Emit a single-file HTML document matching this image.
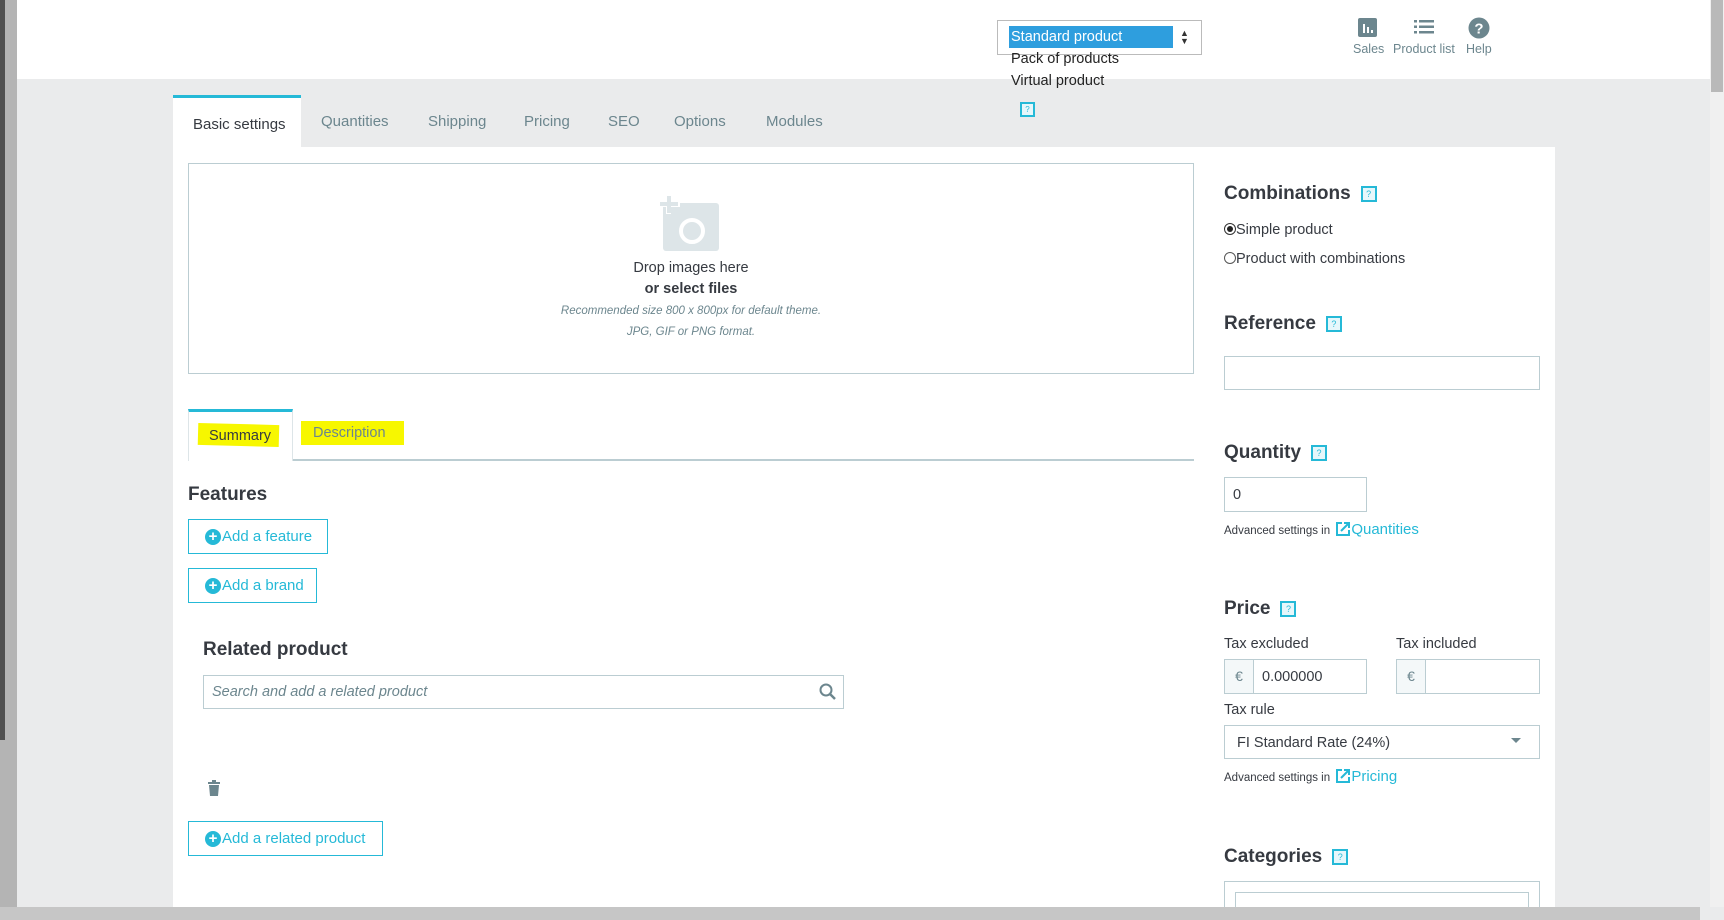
<!DOCTYPE html>
<html><head><meta charset="utf-8"><style>
*{box-sizing:border-box;margin:0;padding:0}
body{width:1724px;height:920px;overflow:hidden;position:relative;background:#eaebec;font-family:"Liberation Sans",sans-serif;color:#363a41}
.a{position:absolute;white-space:nowrap}
.tab{position:absolute;top:113px;font-size:15px;color:#6c868e}
.h{position:absolute;font-size:19px;font-weight:bold;color:#363a41}
.q{display:inline-block;width:16px;height:16px;border:2px solid #25b9d7;background:#e6f7fb;color:#25b9d7;font-size:9px;text-align:center;line-height:12px;vertical-align:middle;margin-left:10px;font-weight:normal}
.inp{position:absolute;border:1px solid #bbcdd2;background:#fff}
.btn{position:absolute;border:1px solid #25b9d7;color:#25b9d7;font-size:15px;background:#fff;padding-left:16px;display:flex;align-items:center}
.plus{display:inline-block;width:16px;height:16px;border-radius:50%;background:#25b9d7;color:#fff;font-size:15px;line-height:16px;text-align:center;font-weight:bold;margin-right:1px}
.lbl{position:absolute;font-size:14.5px;color:#363a41}
.small{position:absolute;font-size:11.5px;color:#363a41}
.lnk{color:#25b9d7;font-size:15px}
</style></head><body>
<div class="a" style="left:0;top:0;width:1724px;height:79px;background:#fff"></div>
<div class="a" style="left:0;top:0;width:17px;height:907px;background:#b4b4b4"></div>
<div class="a" style="left:0;top:0;width:5px;height:740px;background:#505050"></div>
<div class="a" style="left:1710px;top:0;width:14px;height:907px;background:#f0f0f0"></div>
<div class="a" style="left:1711px;top:0;width:12px;height:92px;background:#b9b9b9"></div>

<div class="a" style="left:997px;top:20px;width:205px;height:35px;border:1px solid #bbb;background:#fff"></div>
<div class="a" style="left:1009px;top:26px;width:164px;height:22px;background:#2e9ede;color:#fff;font-size:14.5px;line-height:22px;padding-left:2px">Standard product</div>
<div class="a" style="left:1180px;top:29px;font-size:9px;line-height:8px;color:#333">▲<br>▼</div>
<div class="a" style="left:1011px;top:50px;font-size:14.5px;line-height:18px;color:#222">Pack of products</div>
<div class="a" style="left:1011px;top:72px;font-size:14.5px;line-height:18px;color:#222">Virtual product</div>
<div class="a" style="left:1020px;top:102px;width:15px;height:15px;border:2px solid #25b9d7;background:#e6f7fb;color:#25b9d7;font-size:8px;text-align:center;line-height:11px">?</div>

<svg class="a" style="left:1358px;top:18px" width="20" height="20"><rect width="19" height="19" rx="2" fill="#6c868e"/><rect x="5" y="6" width="2" height="9" fill="#fff"/><rect x="9" y="9" width="2" height="6" fill="#fff"/><rect x="13" y="12" width="2" height="3" fill="#fff"/></svg>
<svg class="a" style="left:1414px;top:19px" width="21" height="16" fill="#6c868e"><rect x="0" y="1" width="3" height="2.5"/><rect x="5" y="1" width="15" height="2.5"/><rect x="0" y="6.5" width="3" height="2.5"/><rect x="5" y="6.5" width="15" height="2.5"/><rect x="0" y="12" width="3" height="2.5"/><rect x="5" y="12" width="15" height="2.5"/></svg>
<svg class="a" style="left:1468px;top:17px" width="22" height="22"><circle cx="11" cy="11" r="10.5" fill="#6c868e"/><text x="11" y="16.5" font-size="15" font-weight="bold" fill="#fff" text-anchor="middle" font-family="Liberation Sans">?</text></svg>
<div class="a" style="left:1353px;top:42px;font-size:12.5px;color:#6c868e">Sales</div>
<div class="a" style="left:1393px;top:42px;font-size:12.5px;color:#6c868e">Product list</div>
<div class="a" style="left:1466px;top:42px;font-size:12.5px;color:#6c868e">Help</div>

<div class="a" style="left:173px;top:147px;width:1382px;height:773px;background:#fff"></div>
<div class="a" style="left:173px;top:95px;width:128px;height:53px;background:#fff;border-top:3px solid #25b9d7"></div>
<div class="tab" style="left:193px;top:116px;color:#363a41">Basic settings</div>
<div class="tab" style="left:321px">Quantities</div>
<div class="tab" style="left:428px">Shipping</div>
<div class="tab" style="left:524px">Pricing</div>
<div class="tab" style="left:608px">SEO</div>
<div class="tab" style="left:674px">Options</div>
<div class="tab" style="left:766px">Modules</div>

<div class="a" style="left:188px;top:163px;width:1006px;height:211px;border:1px solid #bbcdd2"></div>
<svg class="a" style="left:658px;top:196px" width="64" height="58"><rect x="5" y="7" width="56" height="48" rx="3" fill="#dde5e8"/><rect x="0" y="6" width="22" height="5" fill="#fff"/><rect x="8" y="0" width="5" height="18" fill="#fff"/><rect x="2" y="6" width="18" height="4" fill="#dde5e8"/><rect x="9" y="0" width="4" height="17" fill="#dde5e8"/><circle cx="34" cy="35" r="11" fill="none" stroke="#fff" stroke-width="4"/></svg>
<div class="a" style="left:188px;width:1006px;top:260px;text-align:center;font-size:14.5px;color:#363a41">Drop images here</div>
<div class="a" style="left:188px;width:1006px;top:281px;text-align:center;font-size:14.5px;font-weight:bold;color:#363a41">or select files</div>
<div class="a" style="left:188px;width:1006px;top:305px;text-align:center;font-size:11.5px;font-style:italic;color:#6c868e">Recommended size 800 x 800px for default theme.</div>
<div class="a" style="left:188px;width:1006px;top:326px;text-align:center;font-size:11.5px;font-style:italic;color:#6c868e">JPG, GIF or PNG format.</div>

<div class="a" style="left:188px;top:459px;width:1006px;height:2px;background:#bbcdd2"></div>
<div class="a" style="left:188px;top:409px;width:105px;height:52px;background:#fff;border:1px solid #dde5e8;border-top:3px solid #25b9d7;border-bottom:none"></div>
<div class="a" style="left:198px;top:424px;width:81px;height:22px;background:#f7f700;transform:rotate(1.5deg)"></div>
<div class="a" style="left:209px;top:428px;font-size:14.5px;color:#363a41">Summary</div>
<div class="a" style="left:301px;top:421px;width:103px;height:24px;background:#f7f700"></div>
<div class="a" style="left:313px;top:425px;font-size:14.5px;color:#6c868e">Description</div>

<div class="h" style="left:188px;top:484px">Features</div>
<div class="btn" style="left:188px;top:519px;width:140px;height:35px"><span class="plus">+</span>Add a feature</div>
<div class="btn" style="left:188px;top:568px;width:129px;height:35px"><span class="plus">+</span>Add a brand</div>
<div class="h" style="left:203px;top:639px">Related product</div>
<div class="inp" style="left:203px;top:675px;width:641px;height:34px"></div>
<div class="a" style="left:212px;top:684px;font-size:14.5px;font-style:italic;color:#6c868e">Search and add a related product</div>
<svg class="a" style="left:818px;top:682px" width="20" height="20"><circle cx="8" cy="8" r="5.5" fill="none" stroke="#6c868e" stroke-width="2"/><line x1="12" y1="12" x2="17" y2="17" stroke="#6c868e" stroke-width="2.5"/></svg>
<svg class="a" style="left:207px;top:780px" width="14" height="17" fill="#6c868e"><rect x="1" y="2" width="12" height="2"/><rect x="5" y="0" width="4" height="2"/><path d="M2 5h10l-1 11H3z"/></svg>
<div class="btn" style="left:188px;top:821px;width:195px;height:35px"><span class="plus">+</span>Add a related product</div>

<div class="h" style="left:1224px;top:183px">Combinations<span class="q">?</span></div>
<div class="lbl" style="left:1224px;top:222px"><span style="display:inline-block;width:12px;height:12px;border:1px solid #333;border-radius:50%;vertical-align:-1px;position:relative"><span style="position:absolute;left:2px;top:2px;width:6px;height:6px;border-radius:50%;background:#222"></span></span>Simple product</div>
<div class="lbl" style="left:1224px;top:251px"><span style="display:inline-block;width:12px;height:12px;border:1px solid #555;border-radius:50%;vertical-align:-1px"></span>Product with combinations</div>
<div class="h" style="left:1224px;top:313px">Reference<span class="q">?</span></div>
<div class="inp" style="left:1224px;top:356px;width:316px;height:34px"></div>
<div class="h" style="left:1224px;top:442px">Quantity<span class="q">?</span></div>
<div class="inp" style="left:1224px;top:477px;width:143px;height:35px"></div>
<div class="lbl" style="left:1233px;top:487px">0</div>
<div class="small" style="left:1224px;top:521px">Advanced settings in <svg width="16" height="16" style="vertical-align:-3px;margin-left:2px"><path d="M7 2H2v12h12V9" fill="none" stroke="#25b9d7" stroke-width="2"/><path d="M6 10L14 2M9 2h5v5" fill="none" stroke="#25b9d7" stroke-width="2"/></svg><span class="lnk">Quantities</span></div>
<div class="h" style="left:1224px;top:598px">Price<span class="q">?</span></div>
<div class="lbl" style="left:1224px;top:636px">Tax excluded</div>
<div class="lbl" style="left:1396px;top:636px">Tax included</div>
<div class="inp" style="left:1224px;top:659px;width:143px;height:35px"></div>
<div class="a" style="left:1224px;top:659px;width:30px;height:35px;background:#f4f8f9;border:1px solid #bbcdd2;color:#6c868e;font-size:14px;text-align:center;line-height:33px">€</div>
<div class="lbl" style="left:1262px;top:669px">0.000000</div>
<div class="inp" style="left:1396px;top:659px;width:144px;height:35px"></div>
<div class="a" style="left:1396px;top:659px;width:30px;height:35px;background:#f4f8f9;border:1px solid #bbcdd2;color:#6c868e;font-size:14px;text-align:center;line-height:33px">€</div>
<div class="lbl" style="left:1224px;top:702px">Tax rule</div>
<div class="inp" style="left:1224px;top:725px;width:316px;height:34px"></div>
<div class="lbl" style="left:1237px;top:735px">FI Standard Rate (24%)</div>
<div class="a" style="left:1511px;top:738px;width:0;height:0;border-left:5px solid transparent;border-right:5px solid transparent;border-top:5px solid #6c868e"></div>
<div class="small" style="left:1224px;top:768px">Advanced settings in <svg width="16" height="16" style="vertical-align:-3px;margin-left:2px"><path d="M7 2H2v12h12V9" fill="none" stroke="#25b9d7" stroke-width="2"/><path d="M6 10L14 2M9 2h5v5" fill="none" stroke="#25b9d7" stroke-width="2"/></svg><span class="lnk">Pricing</span></div>
<div class="h" style="left:1224px;top:846px">Categories<span class="q">?</span></div>
<div class="inp" style="left:1224px;top:881px;width:316px;height:30px"></div>
<div class="inp" style="left:1235px;top:892px;width:294px;height:20px"></div>
<div class="a" style="left:0;top:907px;width:1700px;height:13px;background:#c6c6c6"></div>
</body></html>
